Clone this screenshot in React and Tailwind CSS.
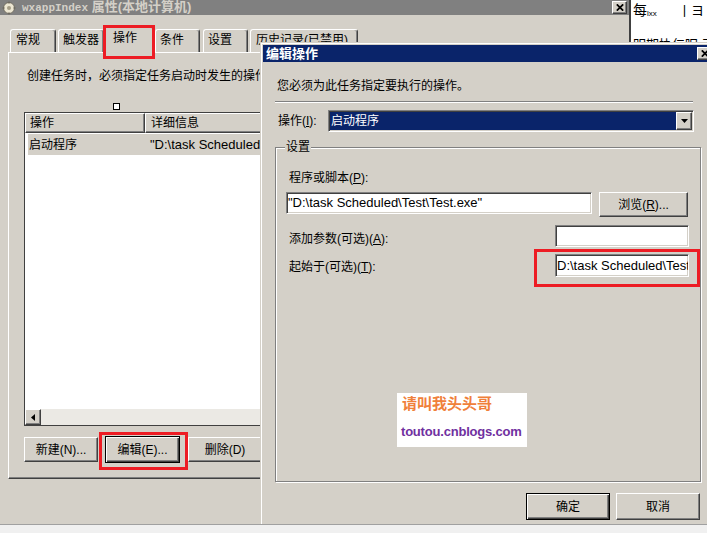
import React from 'react'

const raised =
  'border border-t-white border-l-white border-r-[#404040] border-b-[#404040] shadow-[inset_-1px_-1px_0_#808080] bg-[#d4d0c8]'
const sunken =
  'border border-t-[#808080] border-l-[#808080] border-r-white border-b-white shadow-[inset_1px_1px_0_#404040,inset_-1px_-1px_0_#d4d0c8] bg-white'
const defaultBtn =
  'border border-black shadow-[inset_1px_1px_0_white,inset_-1px_-1px_0_#404040,inset_-2px_-2px_0_#808080] bg-[#d4d0c8]'
const redBox = 'absolute z-30 border-[3px] border-[#ed1c24]'

const Button = ({ className, def, children }) => (
  <div className={`${def ? defaultBtn : raised} ${className} flex items-center justify-center leading-[14px]`}>
    {children}
  </div>
)

const CloseButton = () => (
  <div className={`${raised} w-[15px] h-[13px] flex items-center justify-center`}>
    <svg width="8" height="7" viewBox="0 0 8 7">
      <path d="M0.8 0.3 L7.2 6.7 M7.2 0.3 L0.8 6.7" stroke="black" strokeWidth="1.7" />
    </svg>
  </div>
)

const TitleIcon = () => (
  <svg width="14" height="14" viewBox="0 0 14 14">
    <circle cx="7" cy="7" r="5.5" fill="#ece6d2" stroke="#6e6a60" strokeWidth="1" />
    <circle cx="7" cy="7" r="2" fill="#a49c86" />
    <path d="M7 0.5v2 M7 11.5v2 M0.5 7h2 M11.5 7h2" stroke="#6e6a60" strokeWidth="1.4" />
  </svg>
)

const Tab = ({ className, children }) => (
  <div
    className={`border-t border-l border-r border-t-white border-l-white border-r-[#404040] rounded-t-[3px] shadow-[inset_-1px_0_0_#808080] bg-[#d4d0c8] leading-[14px] whitespace-nowrap overflow-hidden ${className}`}
  >
    {children}
  </div>
)

const BackWindow = () => (
  <div className="absolute z-0 left-0 top-0 w-[630px] h-[524px] bg-[#d4d0c8] flex flex-col">
    <div className="h-[15px] bg-[#808080] flex items-center">
      <div className="ml-[2px] w-[14px] h-[14px]">
        <TitleIcon />
      </div>
      <span className="ml-[6px] font-bold text-[#d4d0c8] text-[13px] leading-[15px] whitespace-nowrap">
        <span className="font-['Liberation_Mono'] text-[11px]">wxappIndex</span> 属性(本地计算机)
      </span>
      <div className="ml-auto mr-[3px]">
        <CloseButton />
      </div>
    </div>

    <div className="relative z-10 flex items-end ml-[10px] mt-[11px] h-[26px]">
      <Tab className="w-[46px] h-[23px] pl-[5px] pt-[3px]">常规</Tab>
      <Tab className="ml-[2px] w-[46px] h-[23px] pl-[4px] pt-[3px]">触发器</Tab>
      <Tab className="w-[50px] h-[27px] -mb-px pl-[8px] pt-[4px]">操作</Tab>
      <Tab className="ml-[1px] w-[45px] h-[23px] pl-[4px] pt-[3px]">条件</Tab>
      <Tab className="ml-[3px] w-[45px] h-[23px] pl-[4px] pt-[3px]">设置</Tab>
      <Tab className="ml-[2px] w-[108px] h-[23px] pl-[5px] pt-[3px]">历史记录(已禁用)</Tab>
    </div>

    <div className="ml-[8px] w-[612px] h-[427px] border border-t-white border-l-white border-r-[#404040] border-b-[#404040] shadow-[inset_-1px_-1px_0_#808080] flex flex-col">
      <p className="ml-[18px] mt-[16px] leading-[14px] whitespace-nowrap">创建任务时，必须指定任务启动时发生的操作。</p>
      <div className="ml-[104px] mt-[20px] w-[7px] h-[7px] bg-white border border-black" />

      <div className="ml-[15px] mt-[2px] w-[600px] h-[314px] border border-[#404040] bg-white flex flex-col">
        <div className="flex h-[20px]">
          <div className={`${raised} w-[120px] pl-[4px] flex items-center leading-[14px]`}>操作</div>
          <div className={`${raised} flex-1 pl-[5px] flex items-center leading-[14px]`}>详细信息</div>
        </div>
        <div className="ml-[3px] mt-[1px] h-[21px] bg-[#d4d0c8] flex items-center whitespace-nowrap leading-[14px]">
          <span className="w-[122px] pl-[1px]">启动程序</span>
          <span className="text-[13px]">{'"D:\\task Scheduled\\Test\\Test.exe"'}</span>
        </div>
        <div className="flex-1" />
        <div className="h-[16px] flex">
          <div className={`${raised} w-[16px] h-[16px] flex items-center justify-center`}>
            <svg width="4" height="7" viewBox="0 0 4 7">
              <path d="M4 0 L0 3.5 L4 7 Z" fill="black" />
            </svg>
          </div>
          <div className="flex-1 bg-[#ebe9e4]" />
        </div>
      </div>

      <div className="ml-[15px] mt-[10px] flex items-center">
        <Button className="w-[74px] h-[25px]">新建(N)...</Button>
        <Button def className="ml-[7px] w-[75px] h-[27px]">编辑(E)...</Button>
        <Button className="ml-[8px] w-[74px] h-[25px]">删除(D)</Button>
      </div>
    </div>
  </div>
)

const SideWindow = () => (
  <div className="absolute z-10 left-[629px] top-0 w-[80px] h-[42px] bg-white border-l-2 border-[#404040] overflow-hidden flex flex-col">
    <div className="flex items-start pt-[3px] pl-[2px] leading-[15px]">
      <span className="text-[14px]">每</span>
      <span className="text-[8px] leading-[8px] mt-[7px]">lxx</span>
      <span className="ml-auto mr-[5px] text-[13px]">丨ヨ</span>
    </div>
    <div className="mt-[20px] pl-[2px] text-[13px] leading-[14px] whitespace-nowrap">明期协仁呢 于</div>
  </div>
)

const Dialog = () => (
  <div className="absolute z-20 left-[260px] top-[42px] w-[460px] h-[482px] bg-[#d4d0c8] border-l border-t border-[#d4d0c8] shadow-[inset_1px_1px_0_white] pl-[2px] pt-[2px] flex flex-col">
    <div className="h-[17px] bg-[#0a246a] flex items-center">
      <span className="pl-[3px] text-white font-bold text-[13px] leading-[15px]">编辑操作</span>
      <div className="ml-auto mr-[8px]">
        <CloseButton />
      </div>
    </div>

    <p className="ml-[14px] mt-[17px] leading-[14px]">您必须为此任务指定要执行的操作。</p>
    <div className="ml-[12px] mt-[8px] w-[418px] h-[2px] border-t border-b border-t-[#808080] border-b-white" />

    <div className="ml-[15px] mt-[7px] flex items-center h-[22px]">
      <span className="w-[50px] leading-[14px]">
        操作(<span className="underline">I</span>):
      </span>
      <div className={`${sunken} w-[366px] h-[22px] p-[1px] flex`}>
        <div className="flex-1 bg-[#0a246a] text-white pl-[1px] flex items-center leading-[14px]">启动程序</div>
        <div className={`${raised} w-[16px] flex items-center justify-center`}>
          <svg width="7" height="4" viewBox="0 0 7 4">
            <path d="M0 0 H7 L3.5 4 Z" fill="black" />
          </svg>
        </div>
      </div>
    </div>

    <div className="ml-[12px] mt-[15px] w-[426px] h-[335px] border border-[#808080] shadow-[inset_1px_1px_0_white,1px_1px_0_white] flex flex-col">
      <span className="-mt-[8px] ml-[9px] px-[1px] bg-[#d4d0c8] self-start leading-[14px]">设置</span>

      <span className="ml-[13px] mt-[17px] leading-[14px]">
        程序或脚本(<span className="underline">P</span>):
      </span>
      <div className="ml-[10px] mt-[7px] flex items-start">
        <div className={`${sunken} w-[306px] h-[22px] flex items-center pl-[1px] text-[13px] whitespace-nowrap overflow-hidden`}>
          {'"D:\\task Scheduled\\Test\\Test.exe"'}
        </div>
        <Button className="ml-[7px] w-[89px] h-[25px]">
          浏览(<span className="underline">R</span>)...
        </Button>
      </div>

      <div className="mt-[8px] flex items-start">
        <span className="ml-[13px] mt-[7px] leading-[14px]">
          添加参数(可选)(<span className="underline">A</span>):
        </span>
        <div className={`${sunken} ml-auto mr-[11px] w-[134px] h-[22px]`} />
      </div>

      <div className="mt-[7px] flex items-start">
        <span className="ml-[13px] mt-[6px] leading-[14px]">
          起始于(可选)(<span className="underline">T</span>):
        </span>
        <div className={`${sunken} ml-auto mr-[11px] w-[134px] h-[23px] flex items-center pl-[1px] text-[13px] whitespace-nowrap overflow-hidden`}>
          {'D:\\task Scheduled\\Test\\'}
        </div>
      </div>

      <div className="ml-[121px] mt-[116px] w-[130px] h-[54px] bg-white flex flex-col">
        <span className="pl-[5px] pt-[1px] text-[15px] leading-[17px] font-bold text-[#f0803a] font-['Noto_Sans_CJK_SC',sans-serif]">
          请叫我头头哥
        </span>
        <span className="pl-[4px] mt-[13px] text-[13px] leading-[15px] font-bold text-[#7030a0] tracking-[-0.2px]">
          toutou.cnblogs.com
        </span>
      </div>
    </div>

    <div className="ml-[263px] mt-[11px] flex">
      <Button def className="w-[84px] h-[27px]">确定</Button>
      <Button className="ml-[6px] w-[84px] h-[27px]">取消</Button>
    </div>
  </div>
)

export default function App() {
  return (
    <div className="w-[707px] h-[533px] overflow-hidden bg-[#d4d0c8] text-[12px] text-black font-['Liberation_Sans','Noto_Sans_CJK_SC',sans-serif] flex flex-col">
      <div className="relative h-[524px] overflow-hidden">
        <BackWindow />
        <SideWindow />
        <Dialog />
        <div className={`${redBox} left-[103px] top-[25px] w-[52px] h-[34px]`} />
        <div className={`${redBox} left-[99px] top-[432px] w-[89px] h-[38px]`} />
        <div className={`${redBox} left-[534px] top-[249px] w-[166px] h-[38px]`} />
      </div>
      <div className="h-[9px] border-t border-[#a0a0a0] bg-[#f0f0f0]" />
    </div>
  )
}
